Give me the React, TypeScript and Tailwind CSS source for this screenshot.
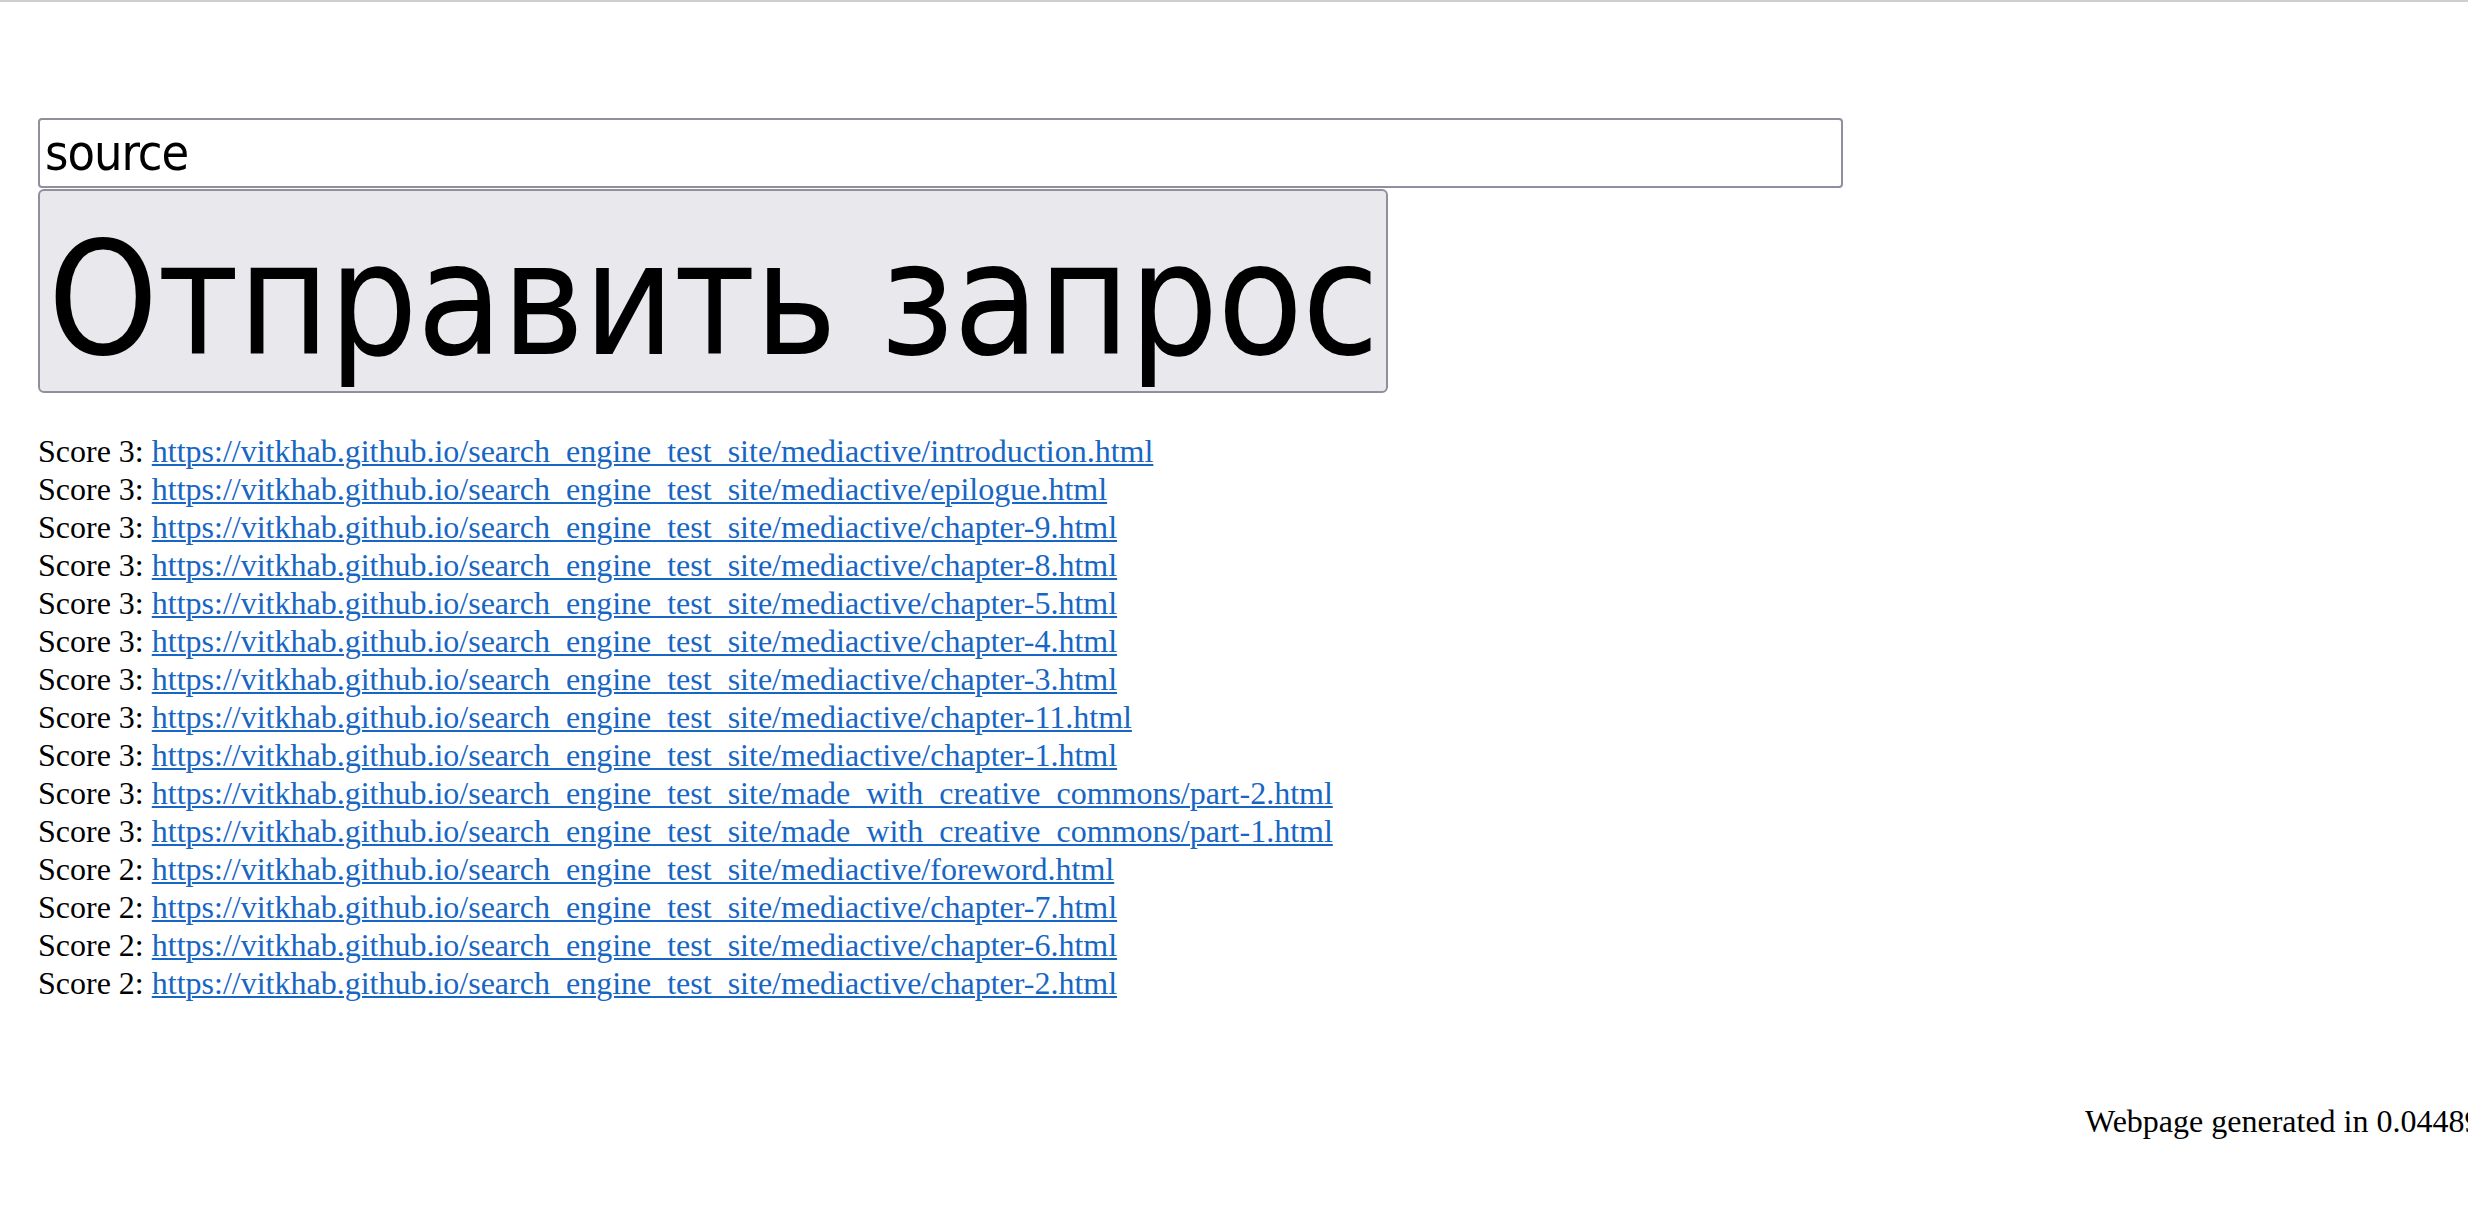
const BASE = 'https://vitkhab.github.io/search_engine_test_site/';

const RESULTS: [number, string][] = [
  [3, 'mediactive/introduction.html'],
  [3, 'mediactive/epilogue.html'],
  [3, 'mediactive/chapter-9.html'],
  [3, 'mediactive/chapter-8.html'],
  [3, 'mediactive/chapter-5.html'],
  [3, 'mediactive/chapter-4.html'],
  [3, 'mediactive/chapter-3.html'],
  [3, 'mediactive/chapter-11.html'],
  [3, 'mediactive/chapter-1.html'],
  [3, 'made_with_creative_commons/part-2.html'],
  [3, 'made_with_creative_commons/part-1.html'],
  [2, 'mediactive/foreword.html'],
  [2, 'mediactive/chapter-7.html'],
  [2, 'mediactive/chapter-6.html'],
  [2, 'mediactive/chapter-2.html'],
];

export default function App() {
  return (
    <div className="min-h-screen w-full overflow-hidden bg-white border-t-2 border-[#cfcfcf] text-black">
      <div className="pl-[38px] pt-[116px]">
        <form className="flex flex-col items-start gap-[1px]" onSubmit={(e) => e.preventDefault()}>
          <input
            type="text"
            value="source"
            readOnly
            className="w-[1805px] h-[70px] px-[5px] border-2 border-[#8f8f9d] rounded-[4px] bg-white text-black text-[50px] tracking-[-1px] leading-none font-['DejaVu_Sans_Condensed','DejaVu_Sans',sans-serif] [font-stretch:condensed] outline-none"
          />
          <button
            type="submit"
            className="w-[1350px] h-[204px] px-[4px] pt-[18px] border-2 border-[#8f8f9d] rounded-[6px] bg-[#e9e9ed] text-black text-[156px] tracking-[-1px] leading-none whitespace-nowrap overflow-hidden font-['DejaVu_Sans_Condensed','DejaVu_Sans',sans-serif] [font-stretch:condensed]"
          >
            Отправить запрос
          </button>
        </form>

        <div className="mt-[39px] font-['Liberation_Serif','Times_New_Roman',serif] text-[32px] leading-[38px]">
          {RESULTS.map(([score, path]) => (
            <div key={path} className="whitespace-nowrap">
              Score {score}:{' '}
              <a href={BASE + path} className="text-[#1766c4] underline decoration-[2px] underline-offset-[2px]">
                {BASE + path}
              </a>
            </div>
          ))}
        </div>
      </div>

      <div className="mt-[100px] pl-[2085px] whitespace-nowrap font-['Liberation_Serif','Times_New_Roman',serif] text-[32px] leading-[38px]">
        Webpage generated in 0.04489135742 seconds
      </div>
    </div>
  );
}
